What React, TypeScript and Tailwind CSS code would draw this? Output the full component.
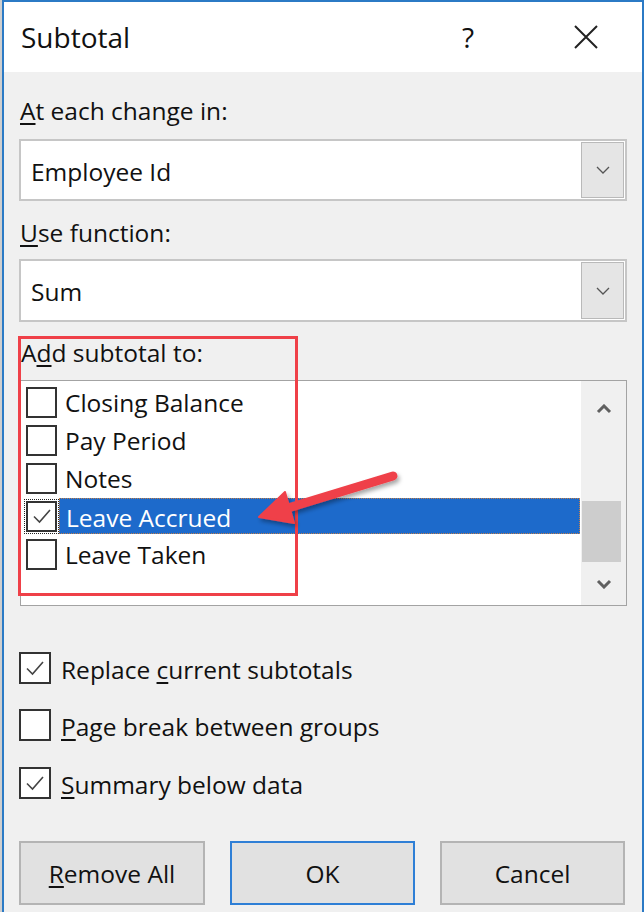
import React from 'react';

const FONT = { fontFamily: '"Open Sans", "Noto Sans", sans-serif' };

function Check({ checked, size }: { checked?: boolean; size: number }) {
  return (
    <div
      className="shrink-0 border-2 border-[#333333] bg-white flex items-center justify-center"
      style={{ width: size, height: size }}
    >
      {checked && (
        <svg width="22" height="22" viewBox="0 0 22 22">
          <path d="M3 11.5 L8.5 17 L19 5" fill="none" stroke="#444" strokeWidth="1.6" />
        </svg>
      )}
    </div>
  );
}

function Chevron({ up, thick }: { up?: boolean; thick?: boolean }) {
  return (
    <svg width="16" height="10" viewBox="0 0 16 10">
      <path
        d={up ? 'M2 8 L8 2 L14 8' : 'M2 2 L8 8 L14 2'}
        fill="none"
        stroke={thick ? '#606060' : '#555'}
        strokeWidth={thick ? 3 : 1.3}
      />
    </svg>
  );
}

function Combo({ value, h }: { value: string; h: string }) {
  return (
    <div className={`flex ${h} border-2 border-[#c6c6c6] bg-white`}>
      <div className="flex-1 pl-[10px] pt-[3px] flex items-center leading-[30px]">{value}</div>
      <div className="w-[43px] my-[1px] mr-[1px] bg-[#e5e5e5] border border-[#b9b9b9] flex items-center justify-center">
        <Chevron />
      </div>
    </div>
  );
}

const u = (s: string) => <span className="underline underline-offset-[3px] decoration-[1.5px]">{s}</span>;

const items = ['Closing Balance', 'Pay Period', 'Notes', 'Leave Accrued', 'Leave Taken'];

function Option({ checked, children, mt }: { checked?: boolean; children: React.ReactNode; mt: string }) {
  return (
    <div className={`${mt} h-[32px] flex items-start gap-[10px]`}>
      <Check size={32} checked={checked} />
      <div className="leading-[29px] mt-[3px] whitespace-nowrap">{children}</div>
    </div>
  );
}

export default function App() {
  return (
    <div className="relative w-[644px] h-[912px] overflow-hidden bg-[#cfcfcf] pl-[2px] text-[24.5px] text-[#111]" style={FONT}>
      <div className="h-full border-2 border-b-0 border-[#2b7ac5] bg-[#f0f0f0] flex flex-col">
        {/* title bar */}
        <div className="h-[70px] shrink-0 bg-white flex items-center">
          <div className="pl-[17px] text-[28px] leading-[28px] flex-1">Subtotal</div>
          <div className="text-[28px] leading-[28px] mr-[99px]">?</div>
          <svg width="26" height="26" viewBox="0 0 26 26" className="mr-[43px]">
            <path d="M2 2 L24 24 M24 2 L2 24" stroke="#222" strokeWidth="2" />
          </svg>
        </div>

        <div className="flex flex-col pl-[15px] pr-[15px]">
          <div className="mt-[24px] leading-[30px] pl-[1px]">{u('A')}t each change in:</div>
          <div className="mt-[13px]">
            <Combo value="Employee Id" h="h-[62px]" />
          </div>
          <div className="mt-[17px] leading-[30px] pl-[1px]">{u('U')}se function:</div>
          <div className="mt-[11px]">
            <Combo value="Sum" h="h-[63px]" />
          </div>
          <div className="mt-[16px] leading-[30px] pl-[2px]">A{u('d')}d subtotal to:</div>

          {/* list box */}
          <div className="mt-[12px] ml-[1px] h-[226px] border border-[#a3a3a3] bg-white flex">
            <div className="flex-1 pt-[2px]">
              {items.map((it) => {
                const sel = it === 'Leave Accrued';
                return (
                  <div key={it} className="h-[38px] flex items-center pl-[5px]">
                    <div className={sel ? 'outline-1 outline-dotted outline-[#222] outline-offset-[1px]' : ''}>
                      <Check size={31} checked={sel} />
                    </div>
                    <div
                      className={`ml-[2px] mr-[1px] flex-1 h-[36px] pl-[6px] pt-[3px] leading-[31px] ${
                        sel ? 'bg-[#1d6acb] text-white border border-dotted border-[#c0804c]' : ''
                      }`}
                    >
                      {it}
                    </div>
                  </div>
                );
              })}
            </div>
            <div className="w-[45px] bg-[#f0f0f0] flex flex-col">
              <div className="h-[56px] flex items-center justify-center">
                <Chevron up thick />
              </div>
              <div className="h-[64px]" />
              <div className="h-[61px] w-[39px] ml-[1px] bg-[#cdcdcd]" />
              <div className="flex-1 flex items-center justify-center">
                <Chevron thick />
              </div>
            </div>
          </div>

          {/* options */}
          <Option mt="mt-[46px]" checked>
            Replace {u('c')}urrent subtotals
          </Option>
          <Option mt="mt-[25px]">{u('P')}age break between groups</Option>
          <Option mt="mt-[26px]" checked>
            {u('S')}ummary below data
          </Option>

          {/* buttons */}
          <div className="mt-[42px] flex gap-[25px]">
            <div className="w-[186px] h-[64px] bg-[#e1e1e1] border-2 border-[#b4b4b4] flex items-center justify-center pt-[2px] leading-[30px]">
              {u('R')}emove All
            </div>
            <div className="w-[185px] h-[64px] bg-[#e1e1e1] border-2 border-[#2f7fd6] flex items-center justify-center pt-[2px] leading-[30px]">
              OK
            </div>
            <div className="w-[185px] h-[64px] bg-[#e1e1e1] border-2 border-[#b4b4b4] flex items-center justify-center pt-[2px] leading-[30px]">
              Cancel
            </div>
          </div>
        </div>
      </div>

      {/* annotation */}
      <div className="absolute left-[18px] top-[336px] w-[280px] h-[260px] border-[3px] border-[#ef4048]" />
      <svg className="absolute left-0 top-0" width="644" height="912" viewBox="0 0 644 912">
        <defs>
          <filter id="sh" x="-20%" y="-50%" width="140%" height="200%">
            <feDropShadow dx="2" dy="3" stdDeviation="2" floodColor="#000" floodOpacity="0.35" />
          </filter>
        </defs>
        <g filter="url(#sh)" fill="#ef4048" stroke="#ef4048">
          <line x1="393" y1="476" x2="288" y2="508" strokeWidth="9" strokeLinecap="round" />
          <polygon points="259,517 294,523 285,492" strokeWidth="2" strokeLinejoin="round" />
        </g>
      </svg>
    </div>
  );
}
